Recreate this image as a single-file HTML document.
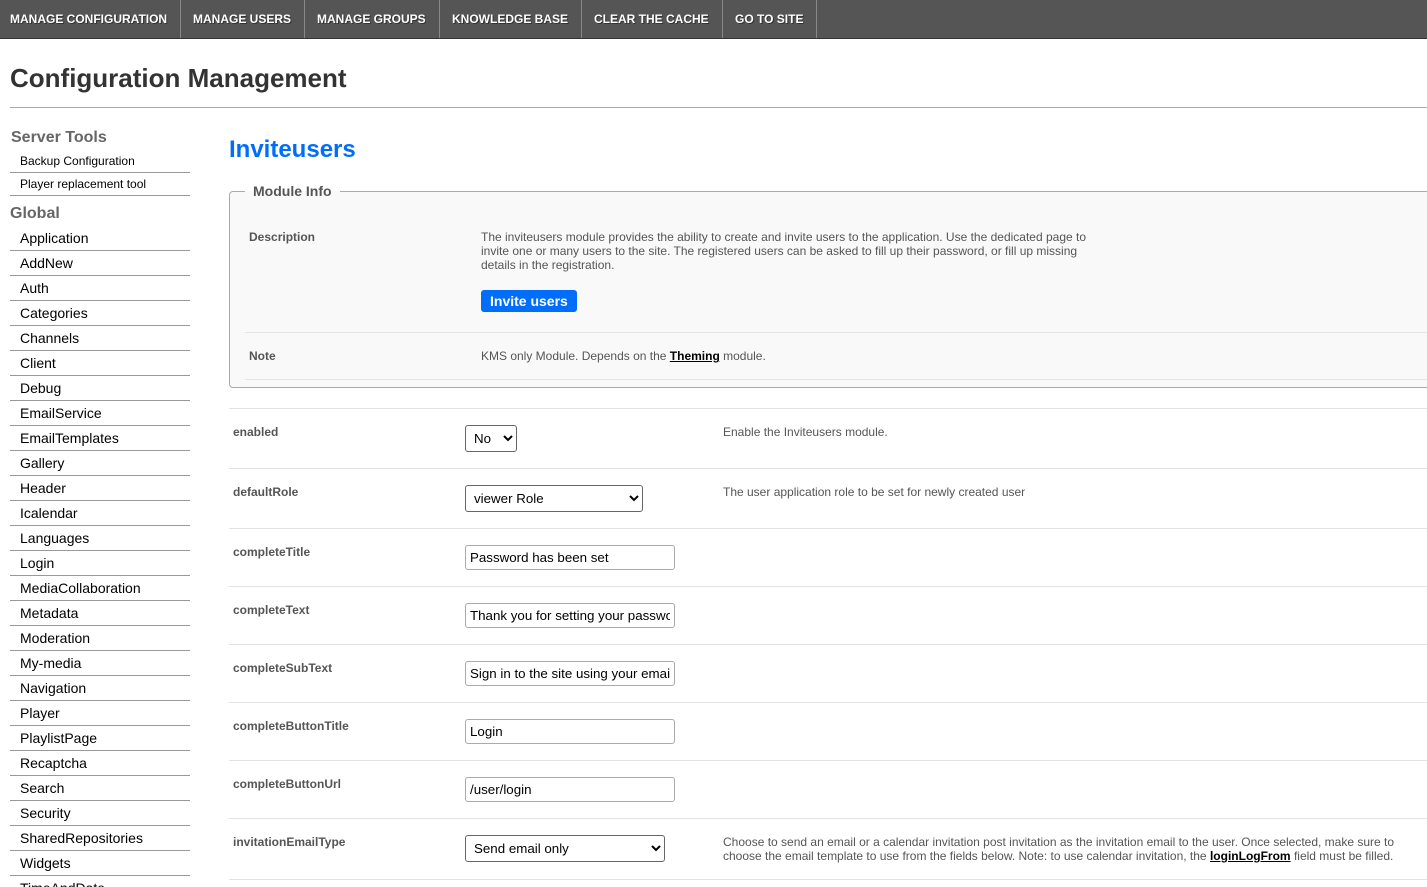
<!DOCTYPE html>
<html><head><meta charset="utf-8"><title>Configuration Management</title>
<style>
html,body{margin:0;padding:0;width:1427px;height:887px;overflow:hidden;background:#fff;font-family:"Liberation Sans",Arial,sans-serif;color:#333}
body{position:relative}
*{box-sizing:border-box}
.a{position:absolute;white-space:nowrap}
#nav{position:absolute;left:0;top:0;width:1427px;height:39px;background:#555;border-bottom:1px solid #333}
#nav span{position:absolute;top:0;height:38px;line-height:38px;font-size:12px;font-weight:bold;color:#fff;text-shadow:1px 1px 0 #333;text-align:left;white-space:nowrap}
#nav i{position:absolute;top:0;width:1px;height:38px;background:#888}
h1{position:absolute;left:10px;top:63px;margin:0;font-size:26px;line-height:30px;font-weight:bold;color:#333;white-space:nowrap}
.hr{position:absolute;background:#e3e3e3;height:1px}
.s{position:absolute;left:10px;width:180px;border-bottom:1px solid #999;color:#000;padding-left:10px;white-space:nowrap}
.s1{height:23px;font-size:12px;line-height:22px}
.s2{height:25px;font-size:14px;line-height:24px}
.g{position:absolute;font-size:16px;line-height:20px;font-weight:bold;color:#666;white-space:nowrap}
.l{position:absolute;left:233px;font-size:12px;line-height:14px;font-weight:bold;color:#555;white-space:nowrap}
.d{position:absolute;left:723px;font-size:12px;line-height:14px;color:#555;white-space:nowrap}
.d a,.n a{color:#000;font-weight:bold;text-decoration:underline}
input{position:absolute;left:465px;width:210px;height:25px;border:1px solid #aaa;border-radius:3px;padding:0 4px 1px;font:13.333px "Liberation Sans",Arial,sans-serif;color:#000;background:#fff;outline:0}
select{position:absolute;left:465px;height:27px;border:1px solid #666;border-radius:3px;padding:0 4px 1px;font:13.333px "Liberation Sans",Arial,sans-serif;color:#000;background:#fff}
fieldset{position:absolute;left:229px;top:183px;width:1300px;height:205px;margin:0;padding:0;border:1px solid #aaa;border-radius:4px;background:#f9f9f9}
legend{margin-left:15px;padding:0 8px;font-size:14px;line-height:16px;font-weight:bold;color:#555}
.n{position:absolute;font-size:12px;line-height:14px;color:#555;white-space:nowrap}
.nb{font-weight:bold}
</style></head><body>
<div id="nav">
<span style="left:10px">MANAGE CONFIGURATION</span><i style="left:180px"></i>
<span style="left:193px">MANAGE USERS</span><i style="left:304px"></i>
<span style="left:317px">MANAGE GROUPS</span><i style="left:439px"></i>
<span style="left:452px">KNOWLEDGE BASE</span><i style="left:581px"></i>
<span style="left:594px">CLEAR THE CACHE</span><i style="left:722px"></i>
<span style="left:735px">GO TO SITE</span><i style="left:816px"></i>
</div>
<h1>Configuration Management</h1>
<div class="a" style="left:10px;top:107px;width:1417px;height:1px;background:#aaa"></div>

<div class="g" style="left:11px;top:128px">Server Tools</div>
<div class="s s1" style="top:150px">Backup Configuration</div>
<div class="s s1" style="top:173px">Player replacement tool</div>
<div class="g" style="left:10px;top:204px">Global</div>
<div class="s s2" style="top:226px">Application</div>
<div class="s s2" style="top:251px">AddNew</div>
<div class="s s2" style="top:276px">Auth</div>
<div class="s s2" style="top:301px">Categories</div>
<div class="s s2" style="top:326px">Channels</div>
<div class="s s2" style="top:351px">Client</div>
<div class="s s2" style="top:376px">Debug</div>
<div class="s s2" style="top:401px">EmailService</div>
<div class="s s2" style="top:426px">EmailTemplates</div>
<div class="s s2" style="top:451px">Gallery</div>
<div class="s s2" style="top:476px">Header</div>
<div class="s s2" style="top:501px">Icalendar</div>
<div class="s s2" style="top:526px">Languages</div>
<div class="s s2" style="top:551px">Login</div>
<div class="s s2" style="top:576px">MediaCollaboration</div>
<div class="s s2" style="top:601px">Metadata</div>
<div class="s s2" style="top:626px">Moderation</div>
<div class="s s2" style="top:651px">My-media</div>
<div class="s s2" style="top:676px">Navigation</div>
<div class="s s2" style="top:701px">Player</div>
<div class="s s2" style="top:726px">PlaylistPage</div>
<div class="s s2" style="top:751px">Recaptcha</div>
<div class="s s2" style="top:776px">Search</div>
<div class="s s2" style="top:801px">Security</div>
<div class="s s2" style="top:826px">SharedRepositories</div>
<div class="s s2" style="top:851px">Widgets</div>
<div class="s s2" style="top:876px">TimeAndDate</div>

<div class="a" style="left:229px;top:135px;font-size:24px;line-height:30px;font-weight:bold;color:#006efa">Inviteusers</div>

<fieldset><legend>Module Info</legend></fieldset>
<div class="n nb" style="left:249px;top:230px">Description</div>
<div class="n" style="left:481px;top:230px">The inviteusers module provides the ability to create and invite users to the application. Use the dedicated page to<br>invite one or many users to the site. The registered users can be asked to fill up their password, or fill up missing<br>details in the registration.</div>
<div class="a" style="left:481px;top:290px;width:96px;height:22px;background:#006efa;border-radius:3px;color:#fff;font-size:14px;font-weight:bold;line-height:22px;padding-left:9px">Invite users</div>
<div class="hr" style="left:245px;top:332px;width:1182px"></div>
<div class="n nb" style="left:249px;top:349px">Note</div>
<div class="n" style="left:481px;top:349px">KMS only Module. Depends on the <a>Theming</a> module.</div>
<div class="hr" style="left:245px;top:379px;width:1182px"></div>

<div class="hr" style="left:229px;top:408px;width:1198px"></div>
<div class="l" style="top:425px">enabled</div>
<select style="top:425px;width:52px"><option>No</option></select>
<div class="d" style="top:425px">Enable the Inviteusers module.</div>
<div class="hr" style="left:229px;top:468px;width:1198px"></div>
<div class="l" style="top:485px">defaultRole</div>
<select style="top:485px;width:178px"><option>viewer Role</option></select>
<div class="d" style="top:485px">The user application role to be set for newly created user</div>
<div class="hr" style="left:229px;top:528px;width:1198px"></div>
<div class="l" style="top:545px">completeTitle</div>
<input style="top:545px" value="Password has been set">
<div class="hr" style="left:229px;top:586px;width:1198px"></div>
<div class="l" style="top:603px">completeText</div>
<input style="top:603px" value="Thank you for setting your password">
<div class="hr" style="left:229px;top:644px;width:1198px"></div>
<div class="l" style="top:661px">completeSubText</div>
<input style="top:661px" value="Sign in to the site using your email">
<div class="hr" style="left:229px;top:702px;width:1198px"></div>
<div class="l" style="top:719px">completeButtonTitle</div>
<input style="top:719px" value="Login">
<div class="hr" style="left:229px;top:760px;width:1198px"></div>
<div class="l" style="top:777px">completeButtonUrl</div>
<input style="top:777px" value="/user/login">
<div class="hr" style="left:229px;top:818px;width:1198px"></div>
<div class="l" style="top:835px">invitationEmailType</div>
<select style="top:835px;width:200px"><option>Send email only</option></select>
<div class="d" style="top:835px">Choose to send an email or a calendar invitation post invitation as the invitation email to the user. Once selected, make sure to<br>choose the email template to use from the fields below. Note: to use calendar invitation, the <a>loginLogFrom</a> field must be filled.</div>
<div class="hr" style="left:229px;top:879px;width:1198px"></div>
</body></html>
